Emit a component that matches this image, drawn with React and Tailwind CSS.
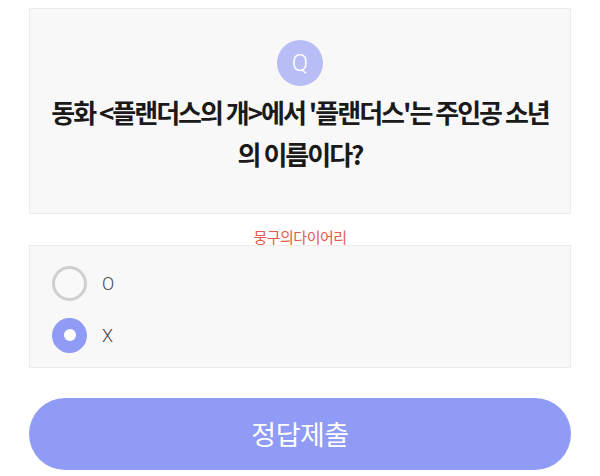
// App.jsx

const kr = { fontFamily: '"Noto Sans CJK KR", "Noto Sans", sans-serif' };

function Radio({ label, checked }) {
  return (
    <label className="flex items-center gap-[15px] h-[52px]">
      {checked ? (
        <span className="w-[35px] h-[35px] rounded-full bg-[#8f9bf4] flex items-center justify-center">
          <span className="w-[12px] h-[12px] rounded-full bg-white" />
        </span>
      ) : (
        <span className="w-[35px] h-[35px] rounded-full border-[3px] border-[#cfcfcf] bg-[#f9f9f9]" />
      )}
      <span
        className="text-[18px] text-[#444] font-light"
        style={{ fontFamily: 'Roboto, "Noto Sans", sans-serif' }}
      >
        {label}
      </span>
    </label>
  );
}

export default function App() {
  return (
    <main className="w-[600px] h-[476px] bg-white px-[29px] pt-[8px]" style={kr}>

      {/* QUESTION CARD */}
      <section className="h-[206px] border border-[#ececec] bg-[#f8f8f8] flex flex-col items-center pt-[31px]">
        <div
          className="w-[46px] h-[46px] rounded-full bg-[#b9bdf6] text-white text-[24px] font-light flex items-center justify-center"
          style={{ fontFamily: 'Roboto, sans-serif' }}
        >
          Q
        </div>
        <h2 className="mt-[5px] px-[10px] text-center text-[26px] font-bold leading-[42px] tracking-[-2px] text-[#1a1a1a]">
          동화 &lt;플랜더스의 개&gt;에서 '플랜더스'는 주인공 소년
          <br />의 이름이다?
        </h2>
      </section>

      {/* SOURCE */}
      <p className="h-[31px] pt-[14px] text-center text-[15px] leading-[17px] tracking-[-0.5px] text-[#e25a4c]">
        뭉구의다이어리
      </p>

      {/* OPTIONS */}
      <section className="h-[123px] border border-[#ececec] bg-[#f8f8f8] px-[22px] pt-[11px]">
        <Radio label="O" />
        <Radio label="X" checked />
      </section>

      {/* SUBMIT */}
      <button className="mt-[30px] w-full h-[72px] rounded-full bg-[#8f9bf4] text-white text-[27px] tracking-[-0.5px] flex items-center justify-center">
        정답제출
      </button>

    </main>
  );
}
